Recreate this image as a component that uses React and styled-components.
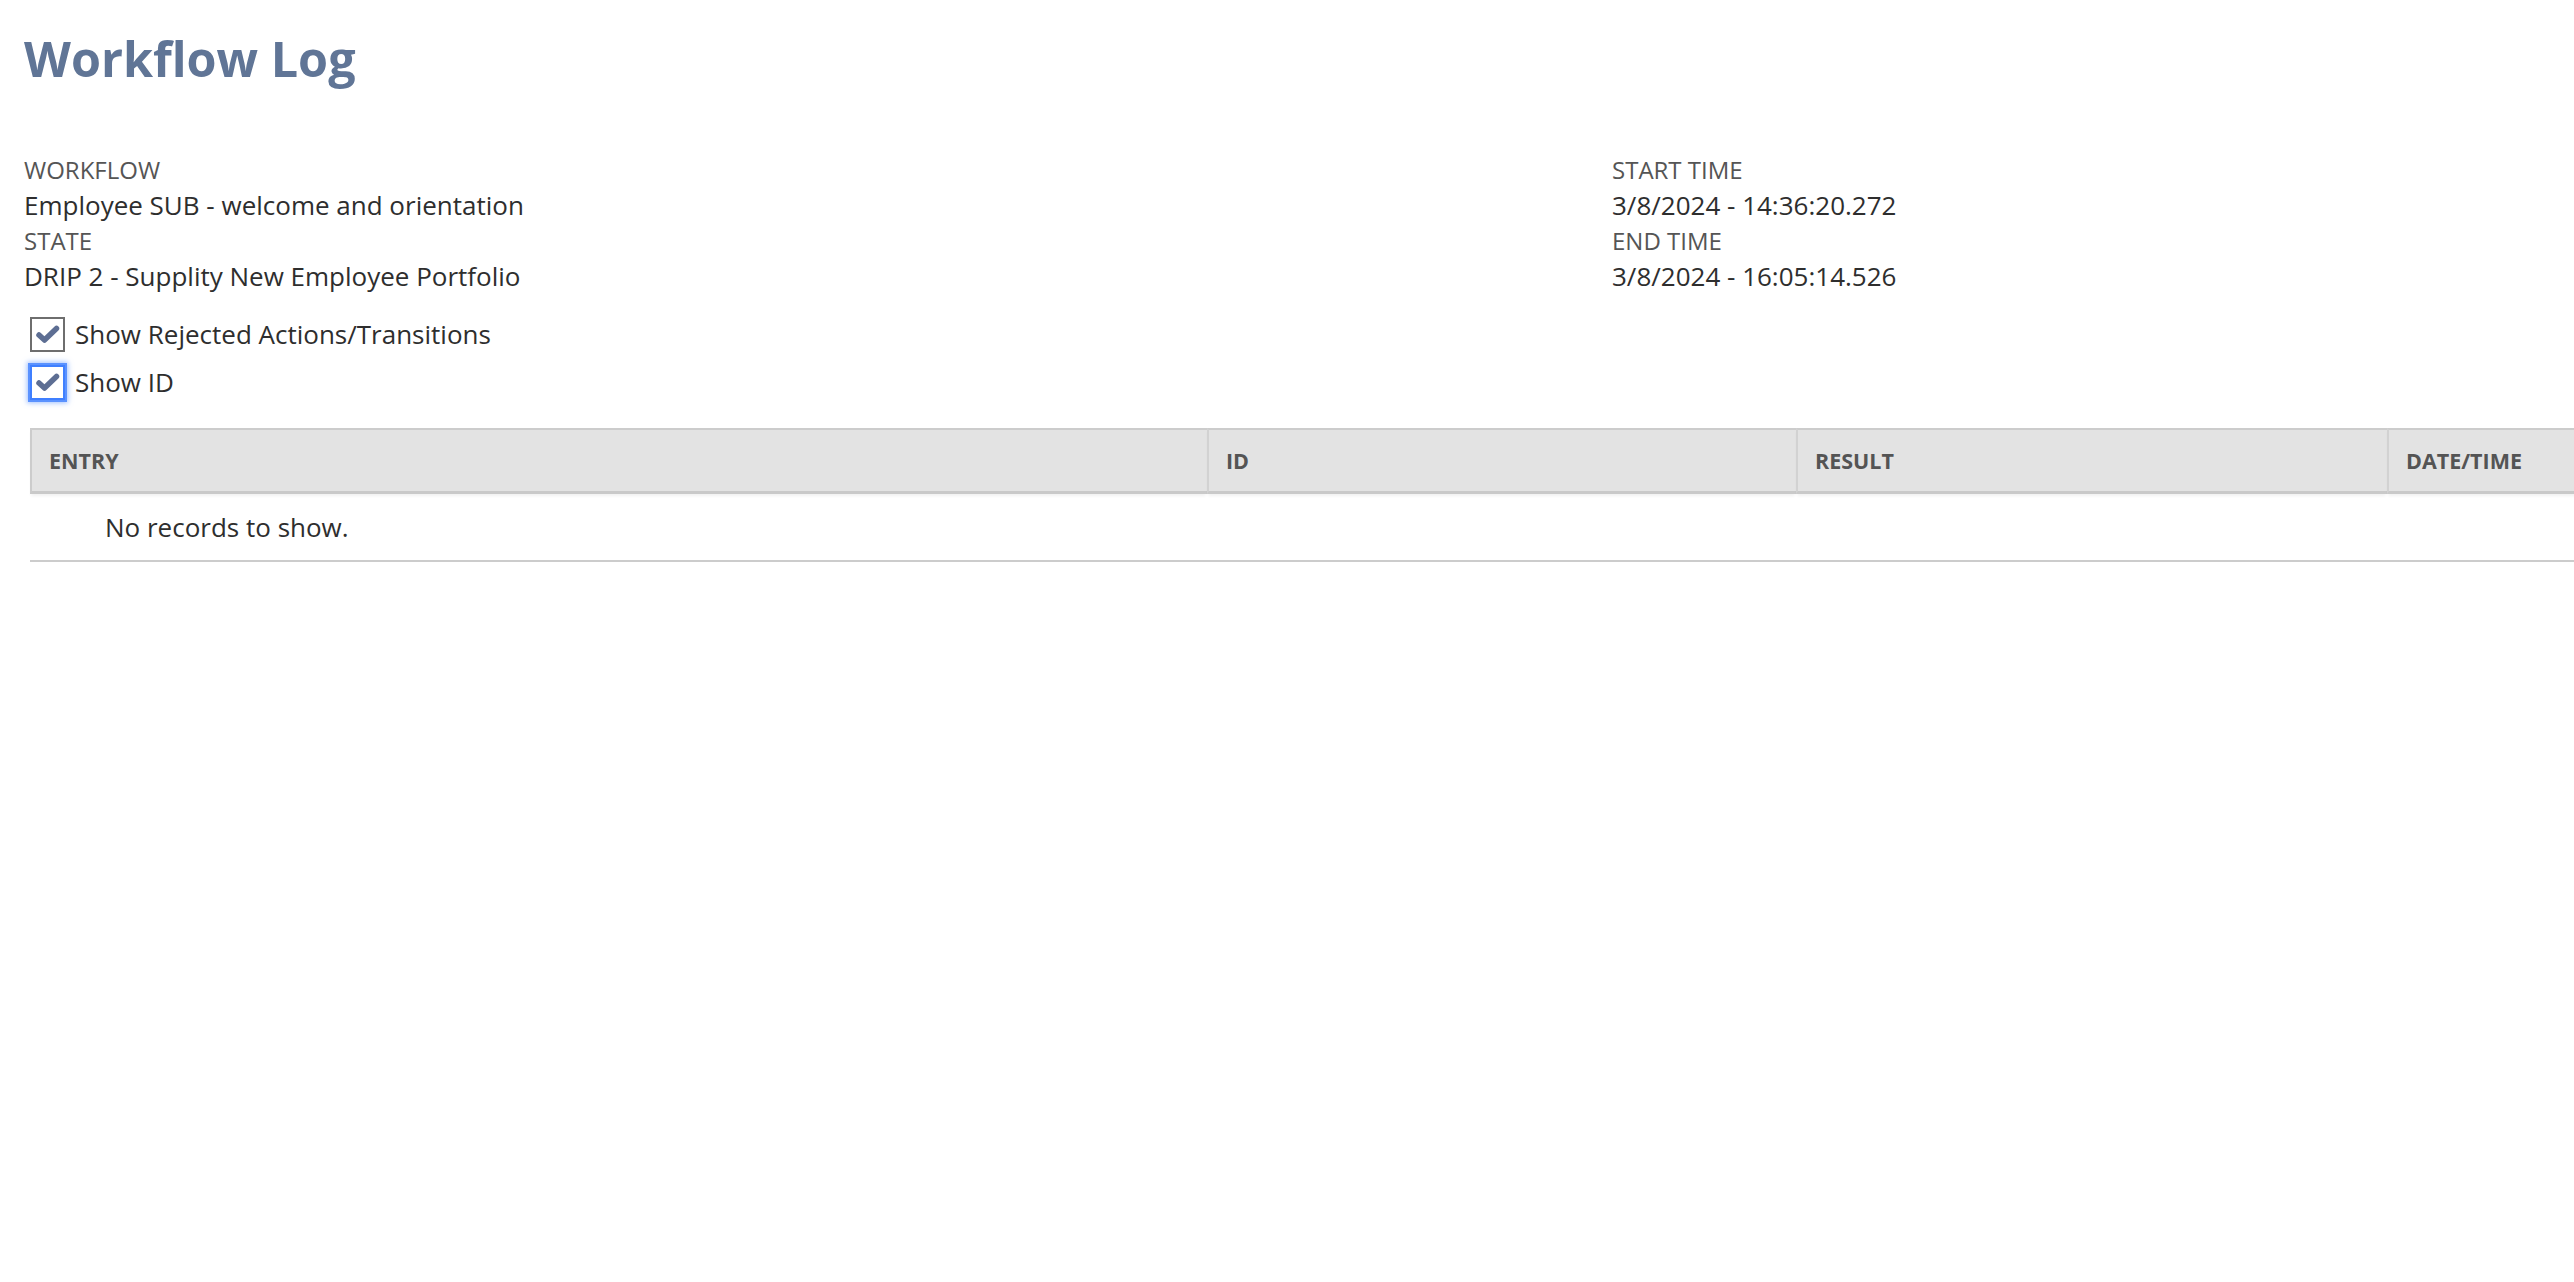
import React from "react";
import styled, { createGlobalStyle } from "styled-components";

const GlobalStyle = createGlobalStyle`
  html, body {
    margin: 0;
    padding: 0;
    background: #ffffff;
    overflow: hidden;
  }
  body {
    font-family: "Open Sans", "Noto Sans", "Liberation Sans", sans-serif;
    color: #333333;
  }
`;

const Page = styled.div`
  padding: 0 0 0 24px;
  width: 3300px;
`;

const Title = styled.h1`
  margin: 27px 0 0 0;
  font-size: 48.5px;
  line-height: 62px;
  font-weight: 700;
  color: #607596;
`;

const FieldGrid = styled.div`
  display: grid;
  grid-template-columns: 1588px 1588px;
  margin-top: 64px;
`;

const FieldColumn = styled.div`
  display: flex;
  flex-direction: column;
`;

const FieldLabel = styled.div`
  font-size: 24px;
  line-height: 34px;
  color: #555555;
  text-transform: uppercase;
`;

const FieldValue = styled.div`
  font-size: 26px;
  line-height: 37px;
  color: #2e2e2e;
`;

const CheckList = styled.div`
  display: flex;
  flex-direction: column;
  margin: 15px 0 0 6px;
`;

const CheckRow = styled.label`
  display: flex;
  align-items: center;
  gap: 10px;
  height: 48px;
  font-size: 26px;
  color: #2e2e2e;
  cursor: pointer;
`;

const Box = styled.span`
  box-sizing: border-box;
  width: 35px;
  height: 35px;
  flex: 0 0 35px;
  display: flex;
  align-items: center;
  justify-content: center;
  background: #ffffff;
  border: 2px solid ${(p) => (p.$focused ? "#3f7fff" : "#6e6e6e")};
  box-shadow: ${(p) =>
    p.$focused
      ? "0 0 0 2px #5a92ff, 0 0 5px 3px rgba(80, 140, 255, 0.55)"
      : "none"};
`;

const CheckMark = () => (
  <svg width="31" height="31" viewBox="0 0 31 31" aria-hidden="true">
    <path
      d="M7 16 L12.5 21 L24.5 9.5"
      fill="none"
      stroke="#5d6e93"
      strokeWidth="5.5"
      strokeLinecap="round"
      strokeLinejoin="round"
    />
  </svg>
);

const TableWrap = styled.div`
  margin: 22px 0 0 6px;
`;

const Table = styled.table`
  border-collapse: separate;
  border-spacing: 0;
  table-layout: fixed;
  width: 3157px;
`;

const HeadCell = styled.th`
  box-sizing: border-box;
  height: 66px;
  padding: 0 0 0 17px;
  text-align: left;
  background: #e3e3e3;
  border-top: 2px solid #cccccc;
  border-bottom: 3px solid #c9c9c9;
  border-left: ${(p) => (p.$first ? "2px solid #cccccc" : "2px solid #d2d2d2")};
  box-shadow: 0 3px 3px -1px rgba(0, 0, 0, 0.06);
  font-size: 21.5px;
  font-weight: 700;
  color: #545454;
  text-transform: uppercase;
  white-space: nowrap;
`;

const EmptyCell = styled.td`
  box-sizing: border-box;
  height: 68px;
  padding: 0 0 0 75px;
  border-bottom: 2px solid #cccccc;
  font-size: 26px;
  color: #2e2e2e;
  white-space: nowrap;
`;

const fields = [
  [
    { label: "Workflow", value: "Employee SUB - welcome and orientation" },
    { label: "State", value: "DRIP 2 - Supplity New Employee Portfolio" },
  ],
  [
    { label: "Start Time", value: "3/8/2024 - 14:36:20.272" },
    { label: "End Time", value: "3/8/2024 - 16:05:14.526" },
  ],
];

const columns = [
  { name: "Entry", width: 1177 },
  { name: "ID", width: 589 },
  { name: "Result", width: 591 },
  { name: "Date/Time", width: 800 },
];

export default function App() {
  return (
    <>
      <GlobalStyle />
      <Page>
        <Title>Workflow Log</Title>
        <FieldGrid>
          {fields.map((col, i) => (
            <FieldColumn key={i}>
              {col.map((f) => (
                <React.Fragment key={f.label}>
                  <FieldLabel>{f.label}</FieldLabel>
                  <FieldValue>{f.value}</FieldValue>
                </React.Fragment>
              ))}
            </FieldColumn>
          ))}
        </FieldGrid>
        <CheckList>
          <CheckRow>
            <Box>
              <CheckMark />
            </Box>
            Show Rejected Actions/Transitions
          </CheckRow>
          <CheckRow>
            <Box $focused>
              <CheckMark />
            </Box>
            Show ID
          </CheckRow>
        </CheckList>
        <TableWrap>
          <Table>
            <colgroup>
              {columns.map((c) => (
                <col key={c.name} style={{ width: c.width }} />
              ))}
            </colgroup>
            <thead>
              <tr>
                {columns.map((c, i) => (
                  <HeadCell key={c.name} $first={i === 0}>
                    {c.name}
                  </HeadCell>
                ))}
              </tr>
            </thead>
            <tbody>
              <tr>
                <EmptyCell colSpan={4}>No records to show.</EmptyCell>
              </tr>
            </tbody>
          </Table>
        </TableWrap>
      </Page>
    </>
  );
}
